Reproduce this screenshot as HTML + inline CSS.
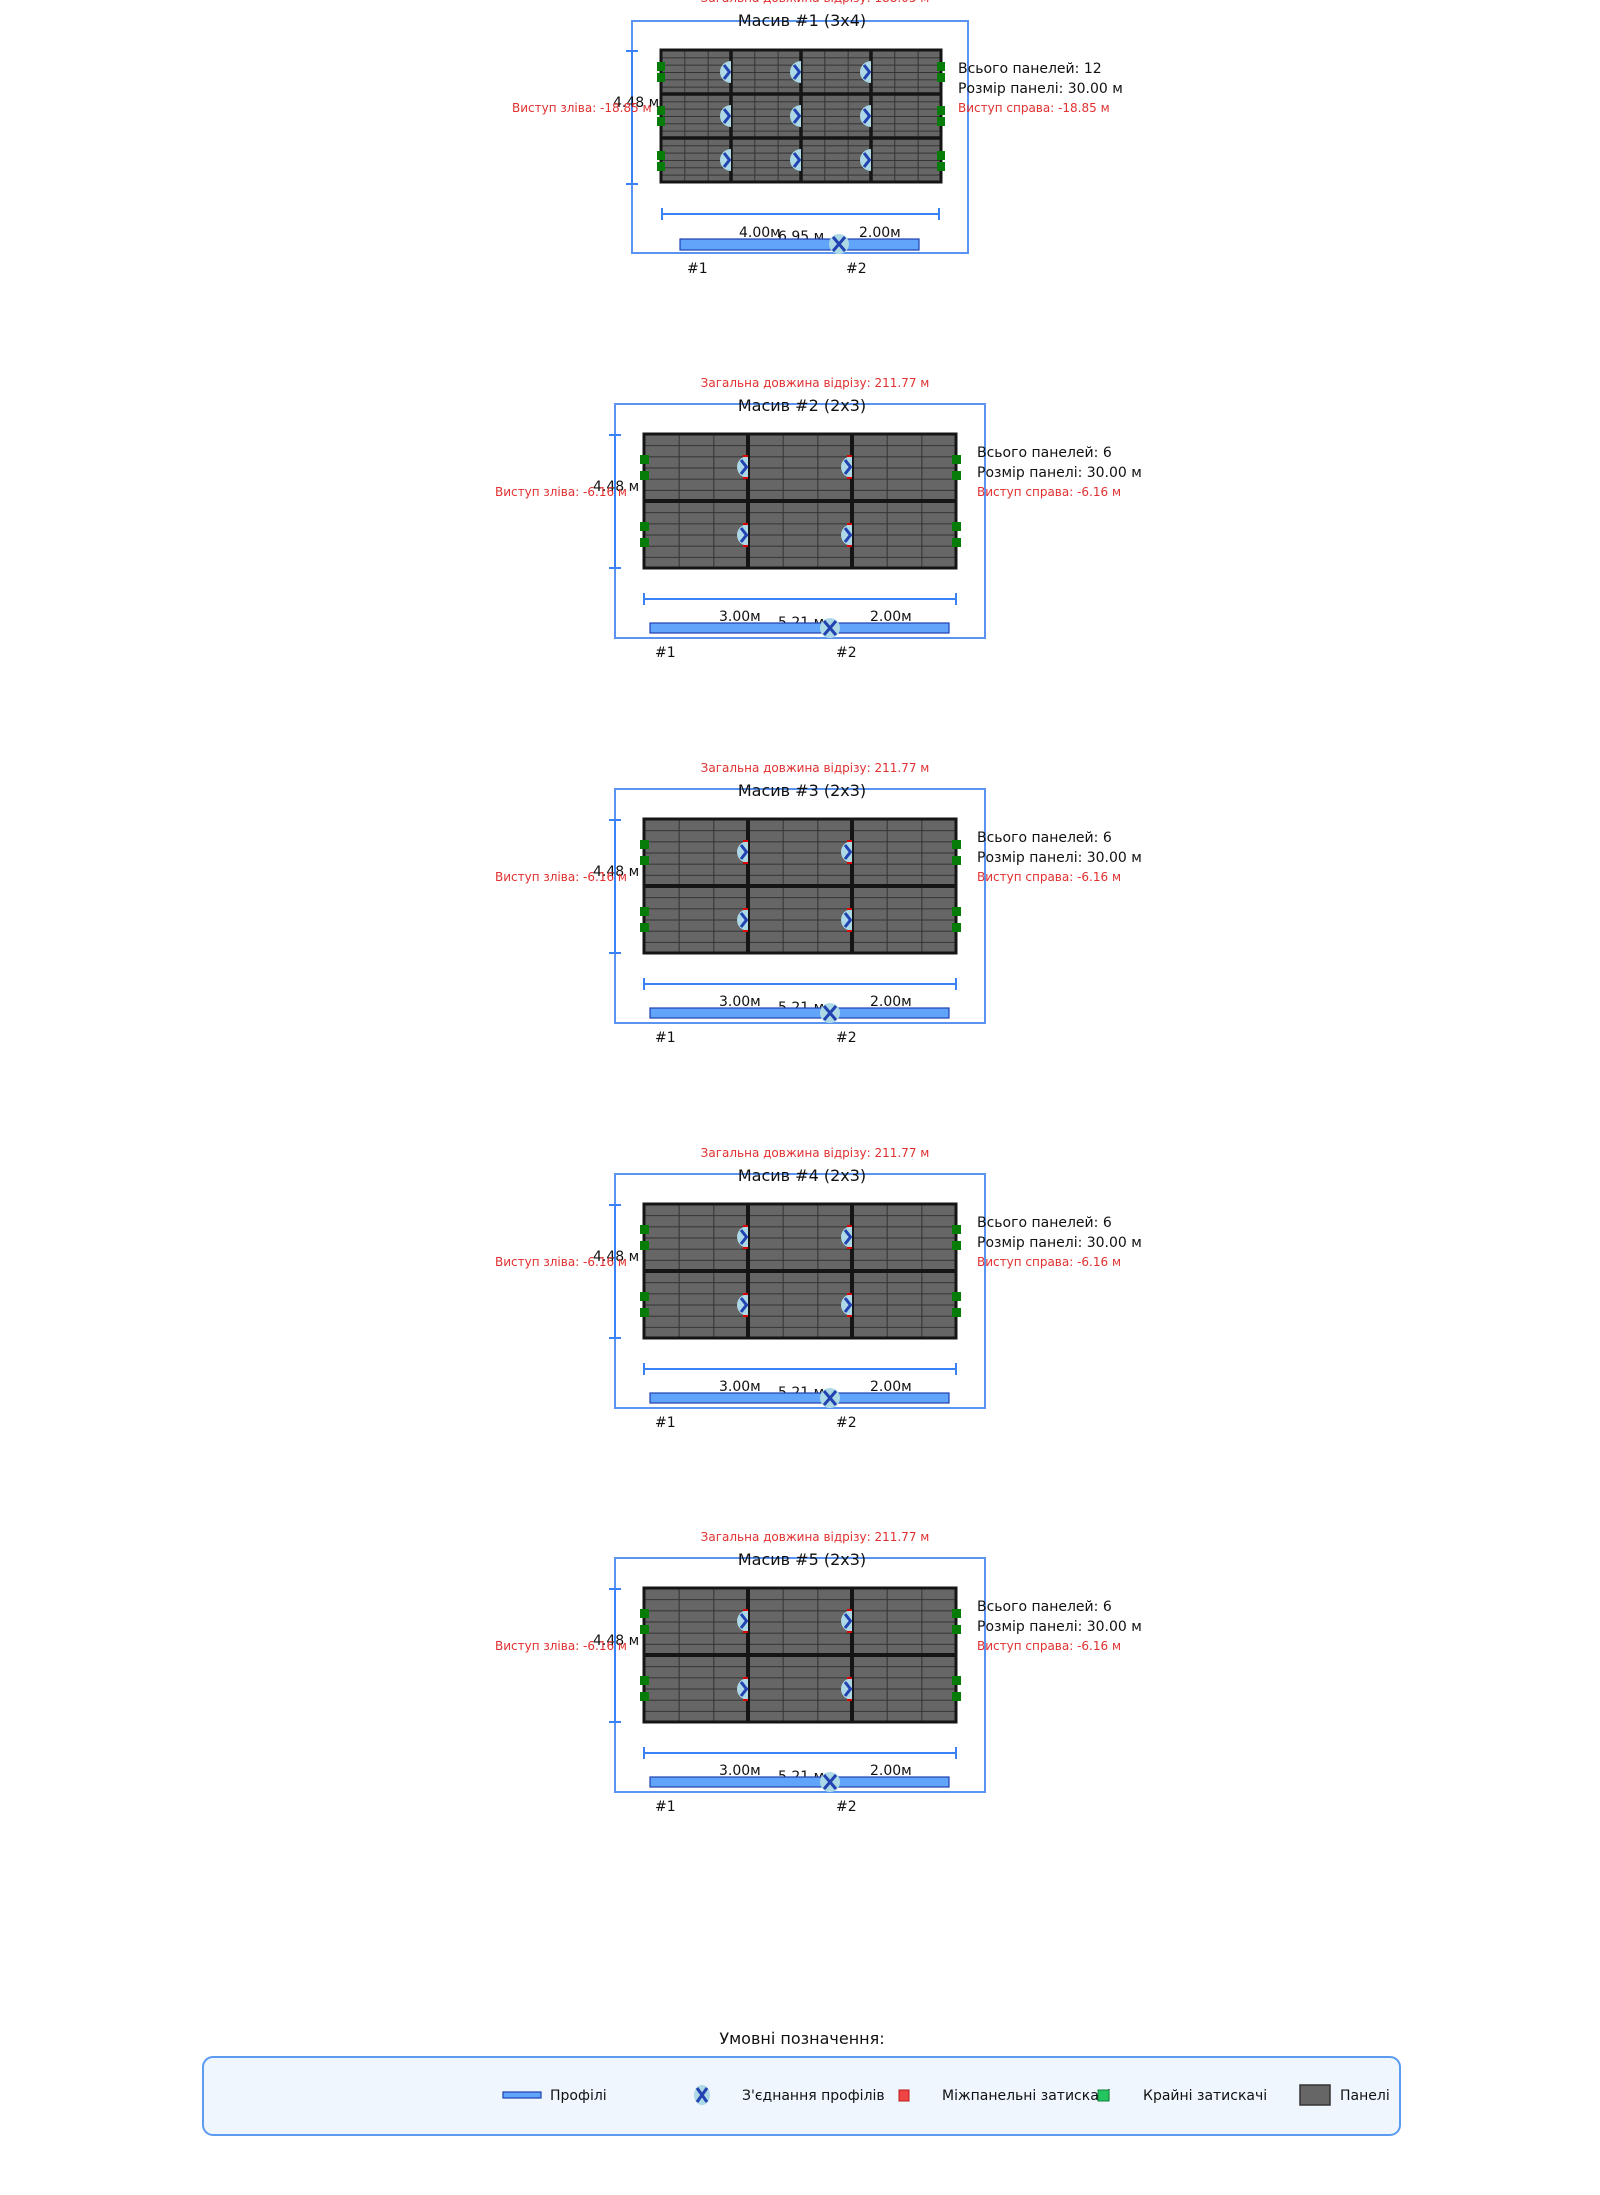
<!DOCTYPE html>
<html><head><meta charset="utf-8"><style>
html,body{margin:0;padding:0;background:#fff;}
svg{display:block;}
text{font-family:"DejaVu Sans","Liberation Sans",sans-serif;}
.t{font-size:16px;fill:#111;}
.i{font-size:14px;fill:#111;}
.r{font-size:12px;fill:#e03030;}
.l{font-size:14px;fill:#111;}
</style></head><body>
<svg width="1600" height="2195" viewBox="0 0 1600 2195" xmlns="http://www.w3.org/2000/svg">
<defs>
<pattern id="p1" x="661" y="50" width="23.33" height="7.33" patternUnits="userSpaceOnUse">
<rect width="23.33" height="7.33" fill="#666"/>
<path d="M0 0.5H23.33M0.5 0V7.33" stroke="#333" stroke-width="1"/>
</pattern>
<pattern id="p2" x="644" y="434" width="34.67" height="11.17" patternUnits="userSpaceOnUse">
<rect width="34.67" height="11.17" fill="#666"/>
<path d="M0 0.5H34.67M0.5 0V11.17" stroke="#333" stroke-width="1"/>
</pattern>
<g id="con">
<path d="M0 -11 A11 11 0 0 0 0 11 Z" fill="#add8e6"/>
<path d="M-7 -7 L-1.5 0 L-7 7" fill="none" stroke="#2142b0" stroke-width="3"/>
</g>
<g id="con2">
<path d="M0 -11 A11 11 0 0 0 0 11 Z" fill="#add8e6"/>
<path d="M-7 -7 L-1.5 0 L-7 7" fill="none" stroke="#2142b0" stroke-width="3"/>
<rect x="-5" y="-12" width="5" height="2" fill="#d00"/>
<rect x="-5" y="10" width="5" height="2" fill="#d00"/>
</g>
<g id="body2">
<rect x="615" y="404" width="370" height="234" fill="none" stroke="#5a93f0" stroke-width="2"/>
<path d="M615 435V568M609 435H621M609 568H621" stroke="#3b82f6" stroke-width="2"/>
<rect x="644" y="434" width="312" height="134" fill="url(#p2)"/>
<path d="M748 434V568M852 434V568M644 501H956" stroke="#151515" stroke-width="4"/>
<rect x="644" y="434" width="312" height="134" fill="none" stroke="#151515" stroke-width="3"/>
<use href="#con2" x="748" y="467"/><use href="#con2" x="852" y="467"/>
<use href="#con2" x="748" y="535"/><use href="#con2" x="852" y="535"/>
<g fill="#087c08">
<rect x="640" y="455" width="9" height="9"/><rect x="640" y="471" width="9" height="9"/>
<rect x="640" y="522" width="9" height="9"/><rect x="640" y="538" width="9" height="9"/>
<rect x="952" y="455" width="9" height="9"/><rect x="952" y="471" width="9" height="9"/>
<rect x="952" y="522" width="9" height="9"/><rect x="952" y="538" width="9" height="9"/>
</g>
<path d="M644 599H956M644 593V605M956 593V605" stroke="#3b82f6" stroke-width="2"/>
</g>
<g id="bars2">
<rect x="650" y="623" width="180" height="10" fill="#60a5fa" stroke="#1e40af" stroke-width="1.2"/>
<rect x="830" y="623" width="119" height="10" fill="#60a5fa" stroke="#1e40af" stroke-width="1.2"/>
<circle cx="830" cy="628" r="10" fill="#add8e6"/>
<path d="M824 621L830 628L824 635M836 621L830 628L836 635" fill="none" stroke="#2142b0" stroke-width="3"/>
</g>
</defs>

<!-- Array 1 -->
<text class="r" x="815" y="2" text-anchor="middle">Загальна довжина відрізу: 188.05 м</text>
<rect x="632" y="21" width="336" height="232" fill="none" stroke="#5a93f0" stroke-width="2"/>
<text class="t" x="802" y="26" text-anchor="middle">Масив #1 (3x4)</text>
<path d="M632 51V184M626 51H638M626 184H638" stroke="#3b82f6" stroke-width="2"/>
<rect x="661" y="50" width="280" height="132" fill="url(#p1)"/>
<path d="M731 50V182M801 50V182M871 50V182M661 94H941M661 138H941" stroke="#151515" stroke-width="3.5"/>
<rect x="661" y="50" width="280" height="132" fill="none" stroke="#151515" stroke-width="3"/>
<g>
<use href="#con" x="731" y="72"/><use href="#con" x="801" y="72"/><use href="#con" x="871" y="72"/>
<use href="#con" x="731" y="116"/><use href="#con" x="801" y="116"/><use href="#con" x="871" y="116"/>
<use href="#con" x="731" y="160"/><use href="#con" x="801" y="160"/><use href="#con" x="871" y="160"/>
</g>
<g fill="#087c08">
<rect x="657" y="62" width="8" height="9"/><rect x="657" y="73" width="8" height="9"/>
<rect x="657" y="106" width="8" height="9"/><rect x="657" y="117" width="8" height="9"/>
<rect x="657" y="151" width="8" height="9"/><rect x="657" y="162" width="8" height="9"/>
<rect x="937" y="62" width="8" height="9"/><rect x="937" y="73" width="8" height="9"/>
<rect x="937" y="106" width="8" height="9"/><rect x="937" y="117" width="8" height="9"/>
<rect x="937" y="151" width="8" height="9"/><rect x="937" y="162" width="8" height="9"/>
</g>
<path d="M662 214H939M662 208V220M939 208V220" stroke="#3b82f6" stroke-width="2"/>
<text class="l" x="739" y="237">4.00м</text>
<text class="l" x="778" y="241">6.95 м</text>
<text class="l" x="859" y="237">2.00м</text>
<rect x="680" y="239" width="159" height="11" fill="#60a5fa" stroke="#1e40af" stroke-width="1.2"/>
<rect x="839" y="239" width="80" height="11" fill="#60a5fa" stroke="#1e40af" stroke-width="1.2"/>
<circle cx="839" cy="244" r="10" fill="#add8e6"/>
<path d="M833 237L839 244L833 251M845 237L839 244L845 251" fill="none" stroke="#2142b0" stroke-width="3"/>
<text class="l" x="687" y="273">#1</text>
<text class="l" x="846" y="273">#2</text>
<text class="l" x="613" y="107">4.48 м</text>
<text class="r" x="512" y="112">Виступ зліва: -18.85 м</text>
<text class="i" x="958" y="73">Всього панелей: 12</text>
<text class="i" x="958" y="93">Розмір панелі: 30.00 м</text>
<text class="r" x="958" y="112">Виступ справа: -18.85 м</text>

<!-- Arrays 2-5 -->
<g transform="translate(0,0)">
<text class="r" x="815" y="387" text-anchor="middle">Загальна довжина відрізу: 211.77 м</text>
<use href="#body2"/>
<text class="t" x="802" y="411" text-anchor="middle">Масив #2 (2x3)</text>
<text class="l" x="719" y="621">3.00м</text>
<text class="l" x="778" y="627">5.21 м</text>
<text class="l" x="870" y="621">2.00м</text>
<use href="#bars2"/>
<text class="l" x="655" y="657">#1</text>
<text class="l" x="836" y="657">#2</text>
<text class="l" x="593" y="491">4.48 м</text>
<text class="r" x="495" y="496">Виступ зліва: -6.16 м</text>
<text class="i" x="977" y="457">Всього панелей: 6</text>
<text class="i" x="977" y="477">Розмір панелі: 30.00 м</text>
<text class="r" x="977" y="496">Виступ справа: -6.16 м</text>
</g>
<g transform="translate(0,385)">
<text class="r" x="815" y="387" text-anchor="middle">Загальна довжина відрізу: 211.77 м</text>
<use href="#body2"/>
<text class="t" x="802" y="411" text-anchor="middle">Масив #3 (2x3)</text>
<text class="l" x="719" y="621">3.00м</text>
<text class="l" x="778" y="627">5.21 м</text>
<text class="l" x="870" y="621">2.00м</text>
<use href="#bars2"/>
<text class="l" x="655" y="657">#1</text>
<text class="l" x="836" y="657">#2</text>
<text class="l" x="593" y="491">4.48 м</text>
<text class="r" x="495" y="496">Виступ зліва: -6.16 м</text>
<text class="i" x="977" y="457">Всього панелей: 6</text>
<text class="i" x="977" y="477">Розмір панелі: 30.00 м</text>
<text class="r" x="977" y="496">Виступ справа: -6.16 м</text>
</g>
<g transform="translate(0,770)">
<text class="r" x="815" y="387" text-anchor="middle">Загальна довжина відрізу: 211.77 м</text>
<use href="#body2"/>
<text class="t" x="802" y="411" text-anchor="middle">Масив #4 (2x3)</text>
<text class="l" x="719" y="621">3.00м</text>
<text class="l" x="778" y="627">5.21 м</text>
<text class="l" x="870" y="621">2.00м</text>
<use href="#bars2"/>
<text class="l" x="655" y="657">#1</text>
<text class="l" x="836" y="657">#2</text>
<text class="l" x="593" y="491">4.48 м</text>
<text class="r" x="495" y="496">Виступ зліва: -6.16 м</text>
<text class="i" x="977" y="457">Всього панелей: 6</text>
<text class="i" x="977" y="477">Розмір панелі: 30.00 м</text>
<text class="r" x="977" y="496">Виступ справа: -6.16 м</text>
</g>
<g transform="translate(0,1154)">
<text class="r" x="815" y="387" text-anchor="middle">Загальна довжина відрізу: 211.77 м</text>
<use href="#body2"/>
<text class="t" x="802" y="411" text-anchor="middle">Масив #5 (2x3)</text>
<text class="l" x="719" y="621">3.00м</text>
<text class="l" x="778" y="627">5.21 м</text>
<text class="l" x="870" y="621">2.00м</text>
<use href="#bars2"/>
<text class="l" x="655" y="657">#1</text>
<text class="l" x="836" y="657">#2</text>
<text class="l" x="593" y="491">4.48 м</text>
<text class="r" x="495" y="496">Виступ зліва: -6.16 м</text>
<text class="i" x="977" y="457">Всього панелей: 6</text>
<text class="i" x="977" y="477">Розмір панелі: 30.00 м</text>
<text class="r" x="977" y="496">Виступ справа: -6.16 м</text>
</g>

<!-- Legend -->
<text x="802" y="2044" text-anchor="middle" style="font-size:16px;fill:#111">Умовні позначення:</text>
<rect x="203" y="2057" width="1197" height="78" rx="10" fill="#eff6fe" stroke="#5b9bf0" stroke-width="2"/>
<rect x="503" y="2092" width="38" height="6" fill="#60a5fa" stroke="#1e40af" stroke-width="1.2"/>
<text class="l" x="550" y="2100">Профілі</text>
<ellipse cx="702" cy="2095" rx="8" ry="10" fill="#add8e6"/>
<path d="M697 2088L707 2102M707 2088L697 2102" stroke="#2142b0" stroke-width="3"/>
<text class="l" x="742" y="2100">З'єднання профілів</text>
<rect x="899" y="2090" width="10" height="11" fill="#ef4444" stroke="#b91c1c" stroke-width="1"/>
<text class="l" x="942" y="2100">Міжпанельні затискачі</text>
<rect x="1098" y="2090" width="11" height="11" fill="#22c55e" stroke="#15803d" stroke-width="1"/>
<text class="l" x="1143" y="2100">Крайні затискачі</text>
<rect x="1300" y="2085" width="30" height="20" fill="#666" stroke="#333" stroke-width="1.5"/>
<text class="l" x="1340" y="2100">Панелі</text>
</svg>
</body></html>
